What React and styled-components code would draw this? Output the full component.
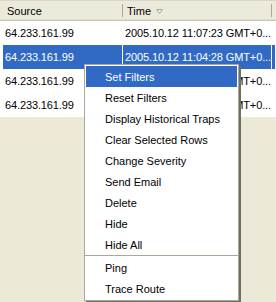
import React from 'react';
import styled, { createGlobalStyle } from 'styled-components';

const GlobalStyle = createGlobalStyle`
  html, body {
    margin: 0;
    padding: 0;
    background: #ece9d8;
  }
  body {
    font-family: "Liberation Sans", Arial, sans-serif;
    font-size: 11px;
    color: #000;
  }
`;

const Screen = styled.div`
  position: relative;
  width: 276px;
  height: 302px;
  overflow: hidden;
  background: #ece9d8;
`;

const Table = styled.div`
  display: grid;
  grid-template-columns: 3px 120px 149px 1fr;
  grid-template-rows: 20px repeat(4, 24px);
  background: #fff;
  border-top: 1px solid #d9d7c9;
`;

const HeaderCell = styled.div`
  position: relative;
  display: flex;
  align-items: center;
  gap: 5px;
  padding-left: 4px;
  background: #ebeadb;
  box-shadow: inset 0 -1px 0 #cbc7b8, inset 0 -2px 0 #dedbcc;
  white-space: nowrap;
  overflow: hidden;
  &::after {
    content: '';
    position: absolute;
    right: 0;
    top: 3px;
    bottom: 4px;
    width: 1px;
    background: #aca899;
    box-shadow: 1px 0 0 #fff;
    display: ${p => (p.$sep ? 'block' : 'none')};
  }
`;

const Cell = styled.div`
  display: flex;
  align-items: center;
  padding-left: 2px;
  letter-spacing: -0.12px;
  white-space: nowrap;
  overflow: hidden;
  background: ${p => (p.$selected ? '#316ac5' : '#fff')};
  color: ${p => (p.$selected ? '#fff' : '#000')};
  border-right: 1px solid ${p => (p.$selected ? '#fff' : 'transparent')};
`;

const Menu = styled.div`
  position: absolute;
  left: 84px;
  top: 64px;
  width: 151px;
  padding: 1px;
  background: #fff;
  border: 1px solid #aca899;
  box-shadow: 2px 2px 0 #716f64;
`;

const Item = styled.div`
  height: 21px;
  display: flex;
  align-items: center;
  padding-left: 19px;
  background: ${p => (p.$active ? '#316ac5' : 'transparent')};
  color: ${p => (p.$active ? '#fff' : '#000')};
`;

const Separator = styled.div`
  height: 1px;
  margin: 0 -1px 1px;
  background: #aca899;
`;

const SortArrow = () => (
  <svg width="7" height="5" viewBox="0 0 7 5">
    <path d="M0.5 0.5 H6.5 L3.5 4.5 Z" fill="none" stroke="#aca899" strokeWidth="1" />
  </svg>
);

const rows = [
  { source: '64.233.161.99', time: '2005.10.12 11:07:23 GMT+0...' },
  { source: '64.233.161.99', time: '2005.10.12 11:04:28 GMT+0...', selected: true },
  { source: '64.233.161.99', time: '2005.10.12 11:07:23 GMT+0...' },
  { source: '64.233.161.99', time: '2005.10.12 11:07:23 GMT+0...' },
];

const menuItems = [
  'Set Filters',
  'Reset Filters',
  'Display Historical Traps',
  'Clear Selected Rows',
  'Change Severity',
  'Send Email',
  'Delete',
  'Hide',
  'Hide All',
  '-',
  'Ping',
  'Trace Route',
];

function App() {
  return (
    <Screen>
      <GlobalStyle />
      <Table>
        <HeaderCell $sep />
        <HeaderCell $sep>Source</HeaderCell>
        <HeaderCell $sep>
          Time <SortArrow />
        </HeaderCell>
        <HeaderCell />
        {rows.map((r, i) => (
          <React.Fragment key={i}>
            <Cell />
            <Cell $selected={r.selected}>{r.source}</Cell>
            <Cell $selected={r.selected}>{r.time}</Cell>
            <Cell $selected={r.selected} />
          </React.Fragment>
        ))}
      </Table>
      <Menu>
        {menuItems.map((m, i) =>
          m === '-' ? (
            <Separator key={i} />
          ) : (
            <Item key={i} $active={i === 0}>
              {m}
            </Item>
          )
        )}
      </Menu>
    </Screen>
  );
}

export default App;
